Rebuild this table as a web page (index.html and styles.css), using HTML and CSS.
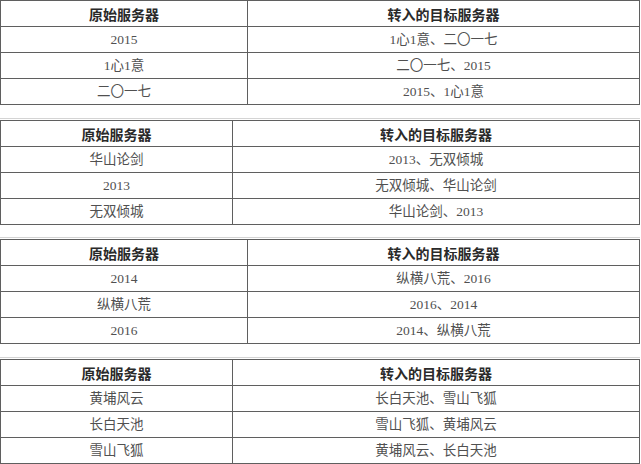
FILE: index.html
```html
<!DOCTYPE html>
<html lang="zh-CN">
<head>
<meta charset="utf-8">
<title>服务器合并</title>
<link rel="stylesheet" href="styles.css">
</head>
<body>
<div class="page">
  <table class="srv wide">
    <colgroup><col class="c1"><col></colgroup>
    <tr class="head"><th>原始服务器</th><th>转入的目标服务器</th></tr>
    <tr><td>2015</td><td>1心1意、二〇一七</td></tr>
    <tr><td>1心1意</td><td>二〇一七、2015</td></tr>
    <tr><td>二〇一七</td><td>2015、1心1意</td></tr>
  </table>
  <table class="srv narrow">
    <colgroup><col class="c1"><col></colgroup>
    <tr class="head"><th>原始服务器</th><th>转入的目标服务器</th></tr>
    <tr><td>华山论剑</td><td>2013、无双倾城</td></tr>
    <tr><td>2013</td><td>无双倾城、华山论剑</td></tr>
    <tr><td>无双倾城</td><td>华山论剑、2013</td></tr>
  </table>
  <table class="srv wide tight">
    <colgroup><col class="c1"><col></colgroup>
    <tr class="head"><th>原始服务器</th><th>转入的目标服务器</th></tr>
    <tr><td>2014</td><td>纵横八荒、2016</td></tr>
    <tr><td>纵横八荒</td><td>2016、2014</td></tr>
    <tr><td>2016</td><td>2014、纵横八荒</td></tr>
  </table>
  <table class="srv narrow">
    <colgroup><col class="c1"><col></colgroup>
    <tr class="head"><th>原始服务器</th><th>转入的目标服务器</th></tr>
    <tr><td>黄埔风云</td><td>长白天池、雪山飞狐</td></tr>
    <tr><td>长白天池</td><td>雪山飞狐、黄埔风云</td></tr>
    <tr><td>雪山飞狐</td><td>黄埔风云、长白天池</td></tr>
  </table>
</div>
</body>
</html>
```
FILE: styles.css
```css
html, body {
  margin: 0;
  padding: 0;
  background: #ffffff;
}
.page {
  display: flex;
  flex-direction: column;
  gap: 15px;
  width: 640px;
}
.srv {
  width: 640px;
  border-collapse: collapse;
  table-layout: fixed;
  font-family: "Liberation Serif", "Noto Sans CJK SC", sans-serif;
  font-size: 13.5px;
  color: #505050;
  box-shadow: 0 -1px 0 #ffffff, 0 -2px 0 #d4d4d4;
}
.tight {
  margin-top: -1px;
}
.wide .c1 { width: 247px; }
.narrow .c1 { width: 232px; }
.srv th, .srv td {
  border: 1px solid #5f5f5f;
  height: 25px;
  padding: 0;
  text-align: center;
  vertical-align: middle;
  line-height: 16px;
  white-space: nowrap;
}
.srv th {
  font-family: "Noto Sans CJK SC", sans-serif;
  font-weight: bold;
  font-size: 14px;
  color: #2a2a2a;
}
```
